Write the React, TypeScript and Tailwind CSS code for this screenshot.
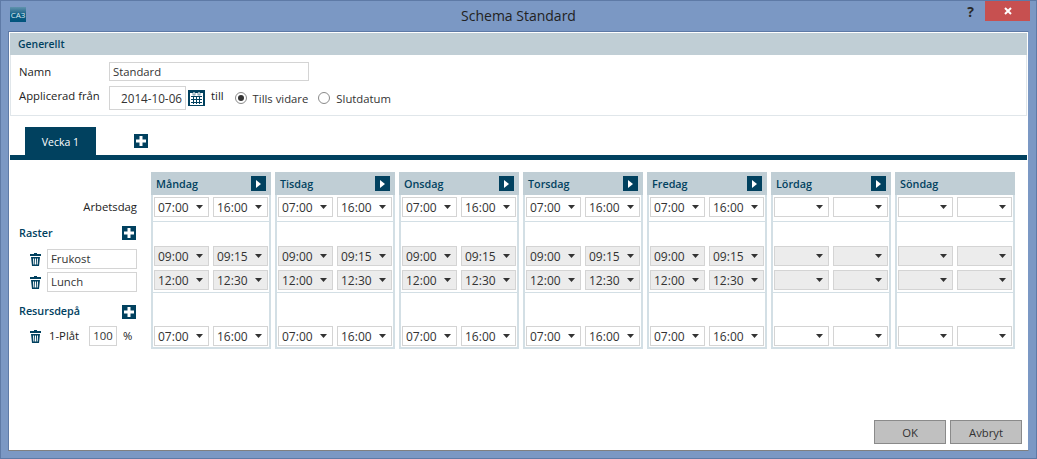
import React from 'react';

const DAYS = [
  { name: 'Måndag', work: ['07:00', '16:00'], arrow: true },
  { name: 'Tisdag', work: ['07:00', '16:00'], arrow: true },
  { name: 'Onsdag', work: ['07:00', '16:00'], arrow: true },
  { name: 'Torsdag', work: ['07:00', '16:00'], arrow: true },
  { name: 'Fredag', work: ['07:00', '16:00'], arrow: true },
  { name: 'Lördag', work: ['', ''], arrow: true },
  { name: 'Söndag', work: ['', ''], arrow: false },
];

const TimeSelect = ({ value, disabled }: { value: string; disabled?: boolean }) => (
  <div
    className={`w-[55px] h-[20px] border border-[#d4d4d4] flex items-center justify-between pl-[3px] pr-[5px] text-[12px] leading-none text-[#333] ${
      disabled ? 'bg-[#ececec]' : 'bg-white'
    }`}
  >
    <span className="pt-[2px]">{value}</span>
    <svg width="7" height="4" viewBox="0 0 7 4" className="fill-[#333]">
      <path d="M0 0h7L3.5 4z" />
    </svg>
  </div>
);

const TimePair = ({ values, disabled }: { values: string[]; disabled?: boolean }) => (
  <div className="flex justify-between">
    <TimeSelect value={values[0]} disabled={disabled} />
    <TimeSelect value={values[1]} disabled={disabled} />
  </div>
);

const PlusButton = () => (
  <div className="w-[14px] h-[14px] bg-[#01415f] flex items-center justify-center">
    <svg width="10" height="10" viewBox="0 0 10 10" className="fill-white">
      <path d="M3.5 0h3v3.5H10v3H6.5V10h-3V6.5H0v-3h3.5z" />
    </svg>
  </div>
);

const PlayButton = () => (
  <div className="w-[15px] h-[15px] bg-[#01415f] flex items-center justify-center">
    <svg width="5" height="8" viewBox="0 0 5 8" className="fill-white">
      <path d="M0 0l5 4-5 4z" />
    </svg>
  </div>
);

const Trash = () => (
  <svg width="11" height="13" viewBox="0 0 11 13" className="fill-[#01415f] shrink-0">
    <path d="M4 0h3v1h4v2H0V1h4zM1 4h9l-1 9H2zM3 5.5l.4 6h1l-.3-6zM5 5.5v6h1v-6zM7 5.5l-.3 6h1l.3-6z" fillRule="evenodd" />
  </svg>
);

const Calendar = () => (
  <div className="w-[17px] h-[16px] bg-[#01415f] flex items-center justify-center">
    <svg width="13" height="13" viewBox="0 0 13 13">
      <rect x="0" y="1" width="13" height="12" fill="#fff" />
      <rect x="3" y="0" width="2" height="3" fill="#fff" stroke="#01415f" strokeWidth="0.5" />
      <rect x="8" y="0" width="2" height="3" fill="#fff" stroke="#01415f" strokeWidth="0.5" />
      <path d="M1 4h11v1H1zM1 7h11v1H1zM1 10h11v1H1zM3 5h1v7H3zM6 5h1v7H6zM9 5h1v7H9z" fill="#01415f" />
    </svg>
  </div>
);

const Radio = ({ checked }: { checked?: boolean }) => (
  <div className="w-[12px] h-[12px] rounded-full border border-[#8a8a8a] bg-white flex items-center justify-center">
    {checked && <div className="w-[6px] h-[6px] rounded-full bg-[#333]" />}
  </div>
);

const DayColumn = ({ day }: { day: (typeof DAYS)[number] }) => {
  const empty = day.work[0] === '';
  return (
    <div className="w-[120px] flex flex-col">
      <div className="h-[23px] bg-[#c0ced5] flex items-center justify-between pl-[5px] pr-[5px] text-[10.8px] font-semibold text-[#01415f]">
        <span className="pt-[2px]">{day.name}</span>
        {day.arrow && <PlayButton />}
      </div>
      <div className="h-[27px] border-x-2 border-b border-[#d3dfe5] px-[1px] pt-[2px]">
        <TimePair values={day.work} />
      </div>
      <div className="h-[71px] border-x-2 border-b border-[#d3dfe5] px-[1px] pt-[24px] flex flex-col gap-[4px]">
        <TimePair values={empty ? ['', ''] : ['09:00', '09:15']} disabled />
        <TimePair values={empty ? ['', ''] : ['12:00', '12:30']} disabled />
      </div>
      <div className="h-[56px] border-x-2 border-b-2 border-[#d3dfe5] px-[1px] pt-[33px]">
        <TimePair values={day.work} />
      </div>
    </div>
  );
};

export default function App() {
  return (
    <div className="w-[1037px] h-[459px] bg-[#7b98c4] border border-[#5e7aa6] flex flex-col font-['Open_Sans','Noto_Sans',sans-serif] text-[11.3px] text-[#222] overflow-hidden">
      <div className="h-[30px] flex items-start justify-between shrink-0 relative">
        <div className="ml-[9px] mt-[6px] w-[16px] h-[15px] bg-gradient-to-b from-[#5f93ad] via-[#0d5f86] to-[#01537c] text-[8px] leading-[15px] text-center text-[#dfe9ee]">
          CA3
        </div>
        <div className="absolute left-0 right-0 top-[5px] text-center text-[14px] leading-[20px] text-[#222]">
          Schema Standard
        </div>
        <div className="flex items-start">
          <span className="text-[14px] font-bold leading-[20px] mt-[1px] mr-[11px] text-[#2a2a2a]">?</span>
          <div className="w-[45px] h-[20px] mr-[6px] bg-[#c75050] flex items-center justify-center">
            <svg width="8" height="8" viewBox="0 0 8 8" className="stroke-white" strokeWidth="2">
              <path d="M1 1l6 6M7 1l-6 6" />
            </svg>
          </div>
        </div>
      </div>

      <div className="mx-[7px] h-[420px] bg-white border border-[#5e7aa6] border-r-[#7b98c4] border-b-[#808080] px-[1px] pt-[1px] flex flex-col relative">
        <div className="h-[22px] bg-[#c0ced5] pl-[8px] pt-[2px] flex items-center font-semibold text-[10.4px] text-[#01415f]">
          Generellt
        </div>
        <div className="h-[61px] border border-t-0 border-[#e0e6ea] pl-[8px] flex flex-col">
          <div className="flex items-center mt-[7px] h-[19px]">
            <span className="w-[90px] pt-[2px]">Namn</span>
            <div className="w-[200px] h-[19px] border border-[#d4d4d4] pl-[3px] pt-[2px] flex items-center text-[#333]">Standard</div>
          </div>
          <div className="flex items-start mt-[5px]">
            <span className="w-[90px] leading-[16px] mt-[2px]">Applicerad från</span>
            <div className="w-[77px] h-[24px] border border-[#d4d4d4] pr-[3px] pt-[2px] flex items-center justify-end text-[11.7px] text-[#333]">2014-10-06</div>
            <div className="ml-[2px] mt-[4px]"><Calendar /></div>
            <span className="ml-[6px] leading-[16px] mt-[2px]">till</span>
            <div className="ml-[11px] mt-[3px] flex items-center gap-[6px] text-[#333]">
              <Radio checked />
              <span className="pt-[2px]">Tills vidare</span>
              <div className="ml-[4px]"><Radio /></div>
              <span className="pt-[2px]">Slutdatum</span>
            </div>
          </div>
        </div>

        <div className="flex items-end h-[39px] ml-[15px] shrink-0">
          <div className="w-[71px] h-[28px] bg-[#01415f] text-white text-[10.5px] pt-[3px] flex items-center justify-center">Vecka 1</div>
          <div className="ml-[38px] mb-[7px]"><PlusButton /></div>
        </div>
        <div className="h-[5px] bg-[#01415f] shrink-0" />

        <div className="flex mt-[12px]">
          <div className="w-[141px] shrink-0 flex flex-col">
            <div className="h-[23px]" />
            <div className="h-[27px] pr-[14px] pb-[3px] flex items-center justify-end">Arbetsdag</div>
            <div className="h-[24px] pl-[9px] pr-[15px] flex items-center justify-between font-semibold text-[10.8px] text-[#01415f] mt-[-1px]">
              <span>Raster</span>
              <PlusButton />
            </div>
            <div className="h-[24px] flex items-center pl-[20px] mt-[2px]">
              <Trash />
              <div className="ml-[6px] w-[90px] h-[20px] border border-[#d4d4d4] pl-[3px] flex items-center text-[#333]">Frukost</div>
            </div>
            <div className="h-[24px] flex items-center pl-[20px] mt-[-1px]">
              <Trash />
              <div className="ml-[6px] w-[90px] h-[20px] border border-[#d4d4d4] pl-[3px] flex items-center text-[#333]">Lunch</div>
            </div>
            <div className="h-[36px] pl-[9px] pr-[15px] flex items-center justify-between font-semibold text-[10.8px] text-[#01415f] mt-[-1px]">
              <span>Resursdepå</span>
              <div className="mt-[2px]"><PlusButton /></div>
            </div>
            <div className="h-[20px] flex items-center pl-[20px] mt-[-3px]">
              <Trash />
              <span className="ml-[8px] w-[40px] pt-[1px]">1-Plåt</span>
              <div className="w-[28px] h-[20px] border border-[#d4d4d4] pt-[1px] flex items-center justify-center text-[#333]">100</div>
              <span className="ml-[6px] pt-[1px]">%</span>
            </div>
          </div>
          <div className="flex gap-[4px]">
            {DAYS.map(d => (
              <DayColumn key={d.name} day={d} />
            ))}
          </div>
        </div>

        <div className="absolute right-[6px] bottom-[6px] flex gap-[4px]">
          <div className="w-[72px] h-[24px] bg-[#c0c0c0] border border-[#8a8a8a] pt-[2px] flex items-center justify-center text-[#333]">OK</div>
          <div className="w-[72px] h-[24px] bg-[#c0c0c0] border border-[#8a8a8a] pt-[2px] flex items-center justify-center text-[#333]">Avbryt</div>
        </div>
      </div>
    </div>
  );
}
